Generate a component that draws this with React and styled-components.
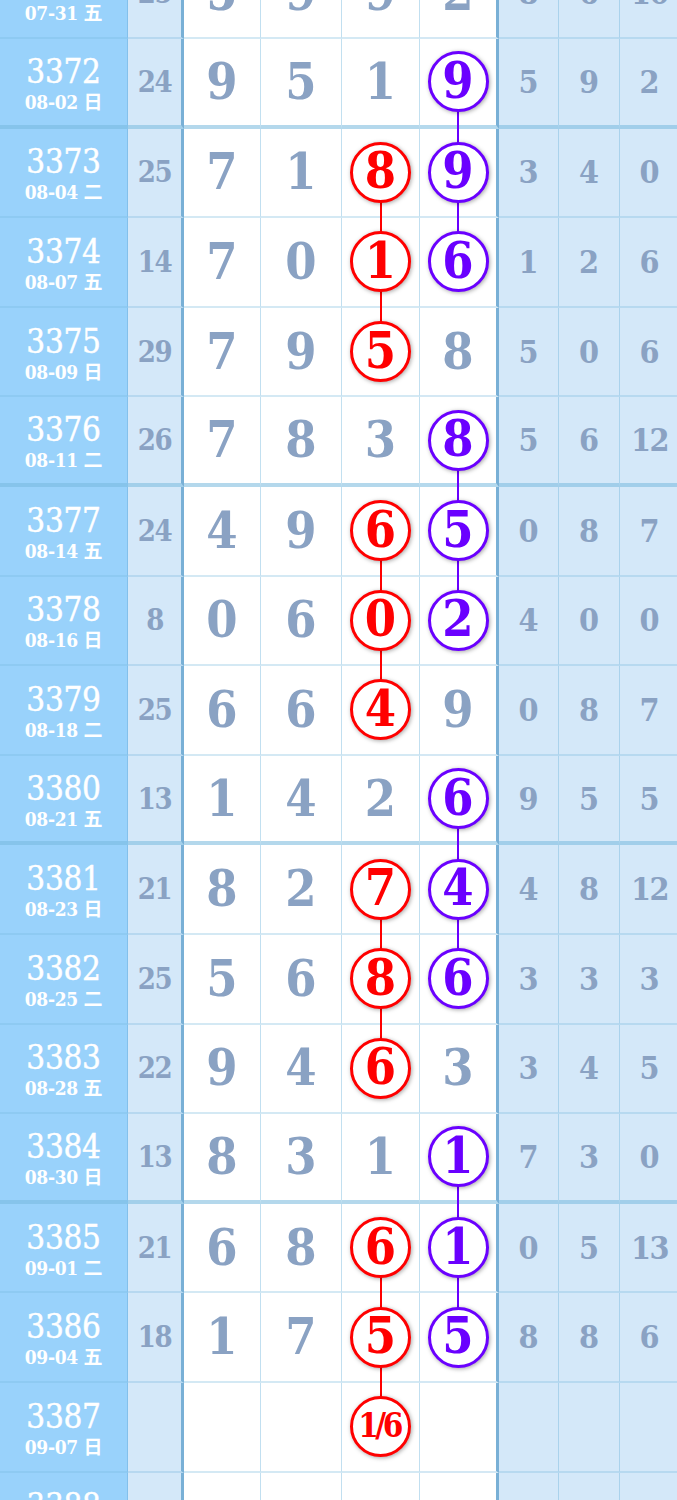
import React from "react";
import styled, { createGlobalStyle } from "styled-components";

const Global = createGlobalStyle`
  html, body { margin: 0; padding: 0; background: #ffffff; overflow: hidden; }
  #root { width: 677px; height: 1500px; overflow: hidden; }
`;

const ROW_H = 89.6;
const SERIF = `"DejaVu Serif", "Noto Sans CJK SC", serif`;

const Table = styled.div`
  width: 680px;
  margin-top: -50.6px;
  font-family: ${SERIF};
`;

const Row = styled.div`
  display: grid;
  grid-template-columns: 128px 56px 77px 81px 78px 79px 60px 61px 60px;
  height: ${ROW_H}px;
`;

const Cell = styled.div`
  position: relative;
  box-sizing: border-box;
  display: flex;
  align-items: center;
  justify-content: center;
  border-right: ${(p) =>
    p.$thick ? "3px solid #79b0d6" : "1px solid rgba(120, 185, 222, 0.45)"};
  border-bottom: ${(p) =>
    p.$groupEnd
      ? "4px solid rgba(120, 185, 222, 0.55)"
      : "2px solid rgba(120, 185, 222, 0.32)"};
`;

const IssueCell = styled(Cell)`
  flex-direction: column;
  background: #99d2fb;
  border-right: 1px solid rgba(110, 175, 220, 0.5);
  color: #ffffff;
  padding-top: 4px;
`;

const IssueNo = styled.div`
  font-family: ${SERIF};
  font-stretch: condensed;
  font-size: 33px;
  font-weight: 400;
  line-height: 34px;
  letter-spacing: -0.3px;
  -webkit-text-stroke: 0.4px #ffffff;
`;

const DateText = styled.div`
  font-family: ${SERIF};
  font-stretch: condensed;
  font-size: 19px;
  font-weight: 700;
  line-height: 22px;
  margin-top: 2px;
  letter-spacing: -0.3px;
`;

const SumCell = styled(Cell)`
  background: #d4e8f9;
  color: #8aa2c3;
  font-size: 29px;
  font-weight: 700;
  font-stretch: condensed;
  letter-spacing: -1.5px;
`;

const MainNum = styled.span`
  color: #8aa2c3;
  font-size: 50px;
  font-weight: 700;
  font-stretch: condensed;
  line-height: 1;
`;

const SideCell = styled(Cell)`
  background: #d4e8f9;
  color: #8aa2c3;
  font-size: 32px;
  font-weight: 700;
  font-stretch: condensed;
  letter-spacing: ${(p) => (p.$wide ? "-1.5px" : "0")};
`;

const Ball = styled.div`
  position: relative;
  z-index: 2;
  width: 61px;
  height: 61px;
  box-sizing: border-box;
  border-radius: 50%;
  border: 3px solid ${(p) => p.$color};
  background: #ffffff;
  color: ${(p) => p.$color};
  box-shadow: 1px 1px 4px rgba(0, 0, 0, 0.35);
  display: flex;
  align-items: center;
  justify-content: center;
  font-size: ${(p) => (p.$small ? "33px" : "50px")};
  font-weight: 700;
  font-stretch: condensed;
  letter-spacing: ${(p) => (p.$small ? "-3.5px" : "0")};
  line-height: 1;
  padding-bottom: 2px;
  padding-right: ${(p) => (p.$small ? "3px" : "0")};
`;

const Link = styled.div`
  position: absolute;
  z-index: 1;
  left: 50%;
  top: 50%;
  width: 2px;
  margin-left: -1px;
  height: ${ROW_H}px;
  background: ${(p) => p.$color};
`;

const RED = "#ff0000";
const PURPLE = "#6a00ff";

const rows = [
  { no: "3371", date: "07-31 五", sum: "25", d: ["5", "9", "9", "2"], r: false, p: false, s: ["8", "6", "10"] },
  { no: "3372", date: "08-02 日", sum: "24", d: ["9", "5", "1", "9"], r: false, p: true, s: ["5", "9", "2"] },
  { no: "3373", date: "08-04 二", sum: "25", d: ["7", "1", "8", "9"], r: true, p: true, s: ["3", "4", "0"] },
  { no: "3374", date: "08-07 五", sum: "14", d: ["7", "0", "1", "6"], r: true, p: true, s: ["1", "2", "6"] },
  { no: "3375", date: "08-09 日", sum: "29", d: ["7", "9", "5", "8"], r: true, p: false, s: ["5", "0", "6"] },
  { no: "3376", date: "08-11 二", sum: "26", d: ["7", "8", "3", "8"], r: false, p: true, s: ["5", "6", "12"] },
  { no: "3377", date: "08-14 五", sum: "24", d: ["4", "9", "6", "5"], r: true, p: true, s: ["0", "8", "7"] },
  { no: "3378", date: "08-16 日", sum: "8", d: ["0", "6", "0", "2"], r: true, p: true, s: ["4", "0", "0"] },
  { no: "3379", date: "08-18 二", sum: "25", d: ["6", "6", "4", "9"], r: true, p: false, s: ["0", "8", "7"] },
  { no: "3380", date: "08-21 五", sum: "13", d: ["1", "4", "2", "6"], r: false, p: true, s: ["9", "5", "5"] },
  { no: "3381", date: "08-23 日", sum: "21", d: ["8", "2", "7", "4"], r: true, p: true, s: ["4", "8", "12"] },
  { no: "3382", date: "08-25 二", sum: "25", d: ["5", "6", "8", "6"], r: true, p: true, s: ["3", "3", "3"] },
  { no: "3383", date: "08-28 五", sum: "22", d: ["9", "4", "6", "3"], r: true, p: false, s: ["3", "4", "5"] },
  { no: "3384", date: "08-30 日", sum: "13", d: ["8", "3", "1", "1"], r: false, p: true, s: ["7", "3", "0"] },
  { no: "3385", date: "09-01 二", sum: "21", d: ["6", "8", "6", "1"], r: true, p: true, s: ["0", "5", "13"] },
  { no: "3386", date: "09-04 五", sum: "18", d: ["1", "7", "5", "5"], r: true, p: true, s: ["8", "8", "6"] },
  { no: "3387", date: "09-07 日", sum: "", d: ["", "", "1/6", ""], r: true, p: false, s: ["", "", ""] },
  { no: "3388", date: "09-10 二", sum: "", d: ["", "", "", ""], r: false, p: false, s: ["", "", ""] },
];

function MainCell({ value, marked, color, linkDown, thick, groupEnd }) {
  return (
    <Cell $thick={thick} $groupEnd={groupEnd}>
      {linkDown && <Link $color={color} />}
      {marked ? (
        <Ball $color={color} $small={value.length > 1}>{value}</Ball>
      ) : (
        <MainNum>{value}</MainNum>
      )}
    </Cell>
  );
}

export default function App() {
  return (
    <>
      <Global />
      <Table>
        {rows.map((row, i) => {
          const next = rows[i + 1] || {};
          const g = ["3372", "3376", "3380", "3384"].includes(row.no);
          return (
            <Row key={row.no}>
              <IssueCell $groupEnd={g}>
                <IssueNo>{row.no}</IssueNo>
                <DateText>{row.date}</DateText>
              </IssueCell>
              <SumCell $thick $groupEnd={g}>{row.sum}</SumCell>
              <MainCell value={row.d[0]} groupEnd={g} />
              <MainCell value={row.d[1]} groupEnd={g} />
              <MainCell value={row.d[2]} groupEnd={g} marked={row.r} color={RED} linkDown={row.r && next.r} />
              <MainCell value={row.d[3]} groupEnd={g} marked={row.p} color={PURPLE} linkDown={row.p && next.p} thick />
              {row.s.map((v, k) => (
                <SideCell key={k} $groupEnd={g} $wide={v.length > 1}>{v}</SideCell>
              ))}
            </Row>
          );
        })}
      </Table>
    </>
  );
}
